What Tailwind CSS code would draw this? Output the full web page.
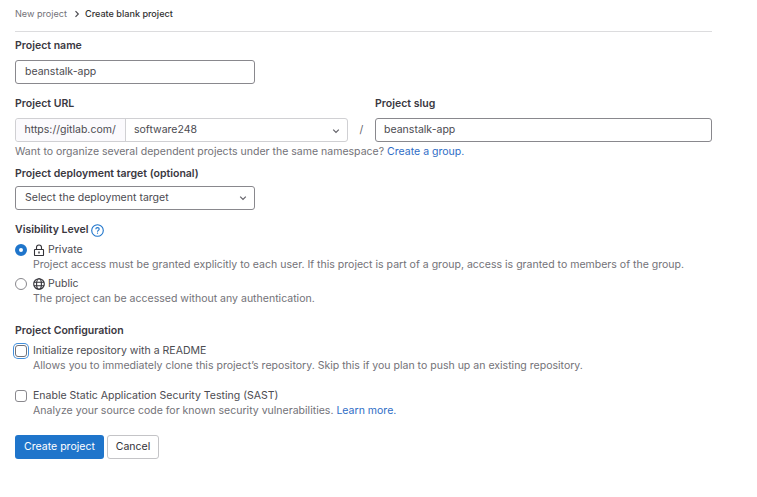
<!DOCTYPE html>
<html lang="en">
<head>
  <meta charset="UTF-8">
  <title>Create blank project</title>
  <script src="https://cdn.jsdelivr.net/npm/@tailwindcss/browser@4"></script>
</head>
<body class="bg-white font-['Inter',sans-serif] text-[10.54px] text-[#626168] w-[757px] h-[497px] overflow-hidden">
  <div class="w-[697px] ml-[15px]">
    <div class="h-[32px] pt-[8px] border-b border-[#dcdcde] flex items-start text-[9.1px] leading-[12px]">
      <span class="text-[#737278]">New project</span>
      <svg class="w-[8px] h-[8px] ml-[6px] mr-[4px] mt-[2px]" viewBox="0 0 8 8" fill="none" stroke="#4c4b51" stroke-width="1.2"><path d="M2.5 1.2 5.3 4 2.5 6.8"/></svg>
      <span class="text-[#303030] font-medium">Create blank project</span>
    </div>

    <label class="block mt-[7px] h-[14px] leading-[13px] font-semibold text-[#3a383f]">Project name</label>
    <div class="mt-[7px] w-[240px] h-[24px] border border-[#89888d] rounded-[3px] pl-[9px] leading-[22px] text-[#4c4b51]">beanstalk-app</div>

    <div class="mt-[13px] flex">
      <div class="w-[333px]">
        <label class="block h-[14px] leading-[13px] font-semibold text-[#3a383f]">Project URL</label>
        <div class="mt-[7px] flex h-[24px] border border-[#d0d0d3] rounded-[3px] leading-[22px] text-[#4c4b51]">
          <span class="w-[110px] shrink-0 bg-[#fbfafd] border-r border-[#d0d0d3] pl-[8.5px] rounded-l-[3px]">https://gitlab.com/</span>
          <span class="flex-1 pl-[8px]">software248</span>
          <svg class="w-[8px] h-[8px] mt-[8px] mr-[7px]" viewBox="0 0 8 8" fill="none" stroke="#626168" stroke-width="1.2"><path d="M1.2 2.6 4 5.4 6.8 2.6"/></svg>
        </div>
      </div>
      <span class="w-[27px] mt-[21px] h-[24px] leading-[24px] text-center text-[#626168]">/</span>
      <div class="flex-1">
        <label class="block h-[14px] leading-[13px] font-semibold text-[#3a383f]">Project slug</label>
        <div class="mt-[7px] h-[24px] border border-[#89888d] rounded-[3px] pl-[8px] leading-[22px] text-[#4c4b51]">beanstalk-app</div>
      </div>
    </div>

    <p class="mt-[3px] h-[14px] leading-[14px] text-[#737278]">Want to organize several dependent projects under the same namespace? <span class="text-[#2f6dc6]">Create a group.</span></p>

    <label class="block mt-[8px] h-[14px] leading-[13px] font-semibold text-[#3a383f]">Project deployment target (optional)</label>
    <div class="mt-[5px] w-[240px] h-[24px] border border-[#89888d] rounded-[3px] pl-[9px] leading-[22px] flex justify-between text-[#4c4b51]">
      <span>Select the deployment target</span>
      <svg class="w-[8px] h-[8px] mt-[7px] mr-[7px]" viewBox="0 0 8 8" fill="none" stroke="#626168" stroke-width="1.2"><path d="M1.2 2.6 4 5.4 6.8 2.6"/></svg>
    </div>

    <div class="mt-[13px] h-[14px] flex items-center gap-[2px] font-semibold text-[#3a383f]">
      <span>Visibility Level</span>
      <svg class="w-[13px] h-[13px]" viewBox="0 0 13 13" fill="none" stroke="#1f75cb" stroke-width="1.1"><circle cx="6.5" cy="6.5" r="5.8"/><path d="M4.8 5.2C4.8 4.2 5.5 3.6 6.5 3.6s1.7.6 1.7 1.5c0 1.3-1.7 1.3-1.7 2.6"/><path d="M6.5 8.6v1.1"/></svg>
    </div>

    <div class="mt-[6px] flex">
      <span class="w-[12px] h-[12px] mt-[1px] rounded-full border-[4px] border-[#1f75cb] bg-white shrink-0"></span>
      <div class="ml-[6px]">
        <div class="flex items-center h-[14px] gap-[3px]">
          <svg class="w-[12px] h-[12px]" viewBox="0 0 12 12" fill="none" stroke="#333238" stroke-width="1.1"><rect x="1.5" y="5.5" width="9" height="6" rx=".5"/><path d="M3.5 5.5V3.5a2.5 2.5 0 0 1 5 0v2"/><path d="M6 7.4v2" stroke-width="1.4"/></svg>
          <span class="text-[#4c4b51]">Private</span>
        </div>
        <p class="h-[16px] leading-[16px] text-[#737278] whitespace-nowrap">Project access must be granted explicitly to each user. If this project is part of a group, access is granted to members of the group.</p>
      </div>
    </div>
    <div class="mt-[4px] flex">
      <span class="w-[12px] h-[12px] mt-[1px] rounded-full border border-[#89888d] bg-white shrink-0"></span>
      <div class="ml-[6px]">
        <div class="flex items-center h-[14px] gap-[3px]">
          <svg class="w-[12px] h-[12px]" viewBox="0 0 12 12" fill="none" stroke="#333238" stroke-width="1.1"><circle cx="6" cy="6" r="5.3"/><ellipse cx="6" cy="6" rx="2.4" ry="5.3"/><path d="M.8 4.2h10.4M.8 7.8h10.4"/></svg>
          <span class="text-[#4c4b51]">Public</span>
        </div>
        <p class="h-[16px] leading-[16px] text-[#737278]">The project can be accessed without any authentication.</p>
      </div>
    </div>

    <div class="mt-[17px] h-[14px] leading-[13px] font-semibold text-[#3a383f]">Project Configuration</div>
    <div class="mt-[6px] flex">
      <span class="w-[12px] h-[12px] mt-[1px] rounded-[3px] border border-[#737278] bg-white shrink-0 shadow-[0_0_0_1px_#fff,0_0_0_2px_#428fdc]"></span>
      <div class="ml-[6px]">
        <div class="h-[14px] leading-[14px] text-[#4c4b51]">Initialize repository with a README</div>
        <p class="h-[16px] leading-[16px] text-[#737278]">Allows you to immediately clone this project’s repository. Skip this if you plan to push up an existing repository.</p>
      </div>
    </div>
    <div class="mt-[15px] flex">
      <span class="w-[12px] h-[12px] mt-[1px] rounded-[3px] border border-[#89888d] bg-white shrink-0"></span>
      <div class="ml-[6px]">
        <div class="h-[14px] leading-[14px] text-[#4c4b51]">Enable Static Application Security Testing (SAST)</div>
        <p class="h-[16px] leading-[16px] text-[#737278]">Analyze your source code for known security vulnerabilities. <span class="text-[#2f6dc6]">Learn more.</span></p>
      </div>
    </div>

    <div class="mt-[16px] flex gap-[3px]">
      <button class="w-[89px] h-[24px] bg-[#1f75cb] rounded-[3px] text-white">Create project</button>
      <button class="w-[52px] h-[24px] border border-[#c4c4c7] rounded-[3px] text-[#333238]">Cancel</button>
    </div>
  </div>
</body>
</html>
